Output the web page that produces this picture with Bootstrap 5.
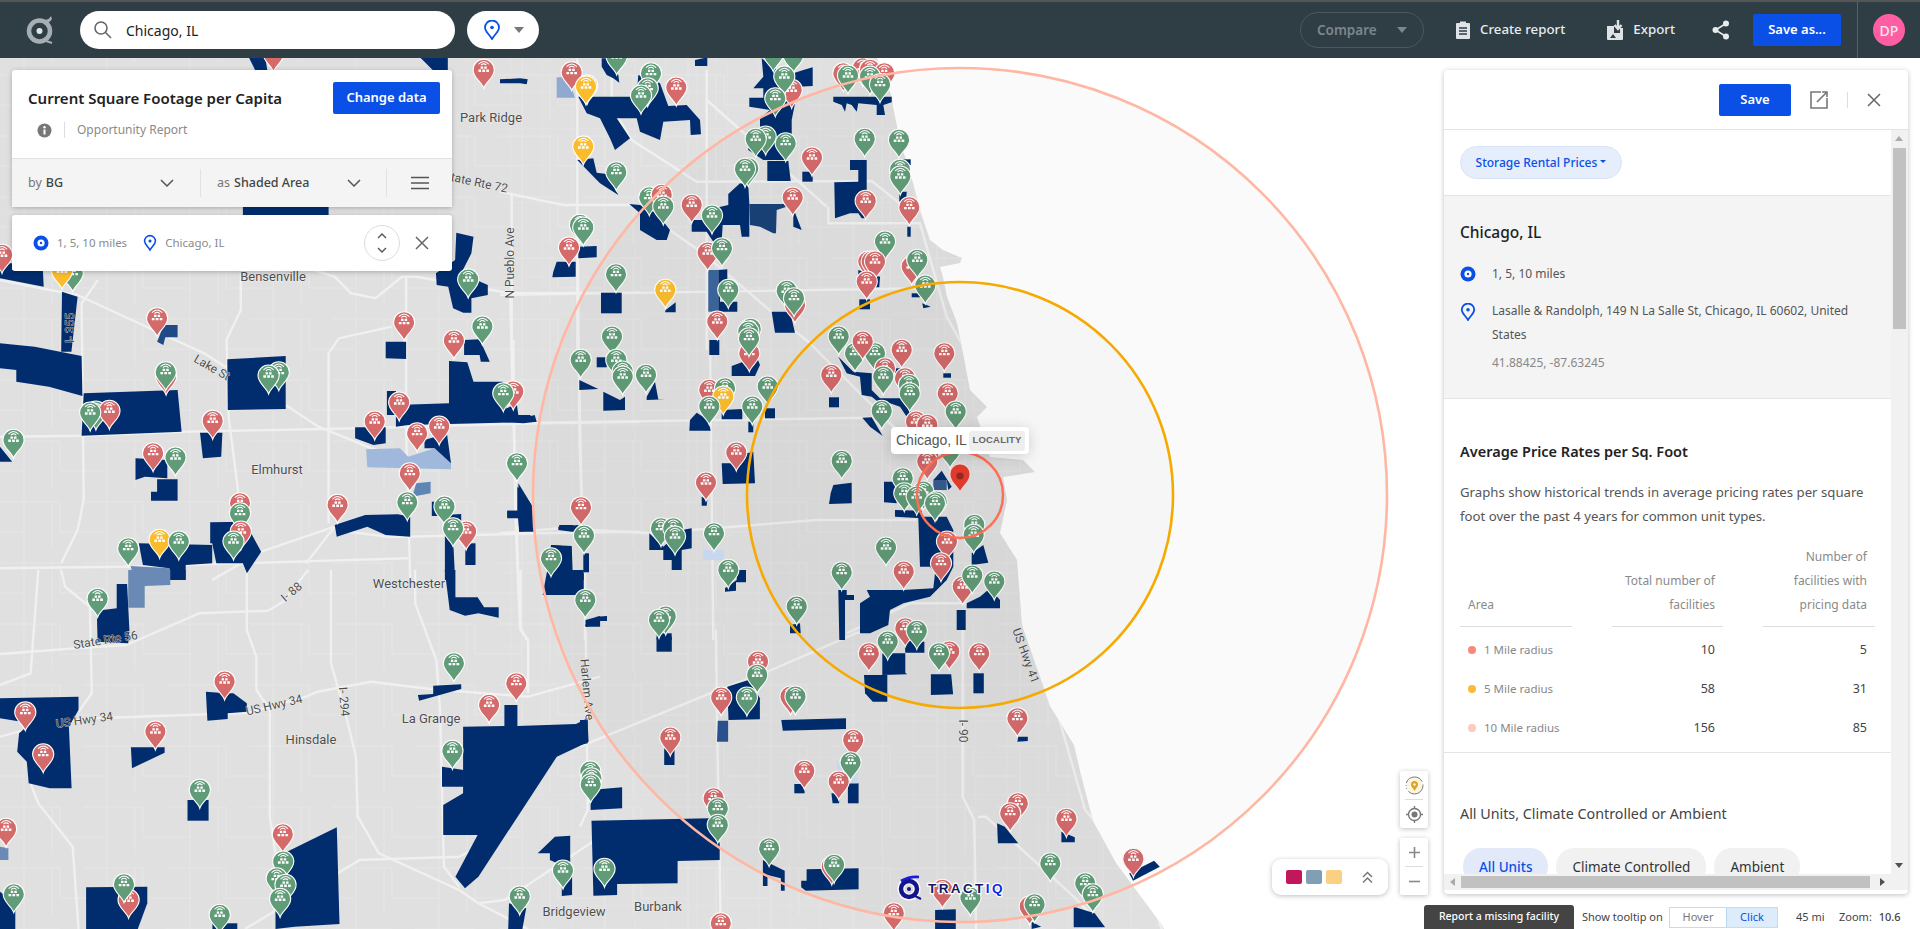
<!DOCTYPE html>
<html lang="en">
<head>
    <meta charset="UTF-8">
    <meta name="viewport" content="width=device-width, initial-scale=1.0">
    <title>Chicago, IL - TractIQ</title>
    <link href="https://cdn.jsdelivr.net/npm/bootstrap@5.3.0/dist/css/bootstrap.min.css" rel="stylesheet">
    <style>
        body { font-family: "Noto Sans", "Liberation Sans", sans-serif; font-size: 13px; color: #333; background: #fff; }
        .tq-page { height: 929px; overflow: hidden; }
        .tq-top { height: 58px; background: #2f3d45; border-top: 2px solid #555; padding: 0; flex-wrap: nowrap; }
        .tq-logo { width: 80px; }
        .tq-search { width: 375px; height: 38px; background: #fff; border-radius: 19px; padding-left: 13px; gap: 13px; font-size: 14px; color: #222; }
        .tq-locpill { width: 72px; height: 38px; background: #fff; border-radius: 19px; margin-left: 12px; gap: 13px; }
        .tq-caret { width: 0; height: 0; border-left: 5px solid transparent; border-right: 5px solid transparent; border-top: 6px solid #777; }
        .tq-compare { width: 124px; height: 36px; border: 1px solid #4a5860; border-radius: 18px; color: #7b878d; font-weight: 600; font-size: 13.5px; padding: 0 16px; }
        .tq-compare .tq-caret { border-top-color: #7b878d; }
        .tq-toplink { color: #e8ecee; font-size: 13.3px; font-weight: 500; gap: 9px; }
        .tq-btn { background: #0a50e6; border: 0; border-radius: 2px; color: #fff; font-weight: 600; font-size: 13px; padding: 0; }
        .tq-btn:hover { background: #0a50e6; color: #fff; }
        .tq-saveas { width: 88px; height: 32px; }
        .tq-userbox { width: 63px; height: 56px; border-left: 1px solid #566269; margin-left: 16px; }
        .tq-avatar { width: 32px; height: 32px; border-radius: 50%; background: #ff5fa2; color: #f3e6ee; font-size: 14px; font-weight: 500; }

        .tq-map { height: 871px; }
        .tq-mapsvg { position: absolute; left: 0; top: 0; }
        .tq-float { position: absolute; background: #fff; border-radius: 3px; box-shadow: 0 1px 5px rgba(0,0,0,.25); }
        .tq-report { left: 12px; top: 12px; width: 440px; height: 137px; }
        .tq-report-top { height: 88px; padding: 12px 12px 0 16px; }
        .tq-report-title { font-size: 15px; font-weight: 600; color: #222; }
        .tq-change { width: 107px; height: 32px; }
        .tq-report-sub { color: #8a8a8a; font-size: 12px; gap: 12px; margin: 7px 0 0 0; padding-left: 9px; }
        .tq-vsep { width: 1px; height: 16px; background: #ddd; }
        .tq-report-bar { height: 49px; background: #f4f4f4; border-top: 1px solid #e2e2e2; font-size: 12.5px; color: #777; }
        .tq-report-bar b { font-weight: 500; color: #444; margin-left: 4px; }
        .tq-cell1 { width: 188px; padding: 0 26px 0 16px; }
        .tq-cell2 { width: 187px; padding: 0 25px 0 16px; border-left: 1px solid #e2e2e2; border-right: 1px solid #e2e2e2; height: 28px; }
        .tq-area { left: 12px; top: 157px; width: 440px; height: 56px; padding: 0 23px 0 21px; color: #8a8a8a; font-size: 11.5px; }
        .tq-stepper { width: 36px; height: 36px; border: 1px solid #ddd; border-radius: 50%; margin-right: 15px; }

        .tq-tip { left: 891px; top: 369px; width: 138px; height: 27px; border-radius: 4px; padding: 0 4px 0 5px; box-shadow: 0 2px 14px rgba(0,0,0,.16); font-family: "Liberation Sans", sans-serif; font-size: 14px; color: #555; }
        .tq-tipbadge { width: 56px; height: 20px; background: #eee; border-radius: 3px; font-size: 9.5px; font-weight: 700; color: #666; letter-spacing: .2px; }
        .tq-ctrl { left: 1400px; width: 28px; height: 57px; border-radius: 2px; }
        .tq-ctrl1 { top: 713px; }
        .tq-ctrl2 { top: 780px; }
        .tq-ctrl-line { height: 1px; background: #ddd; margin: 0 5px; }
        .tq-ctrl-cell { height: 28px; }
        .tq-legend { left: 1272px; top: 801px; width: 116px; height: 36px; border-radius: 9px; padding-left: 14px; gap: 4px; }
        .tq-swatch { width: 16px; height: 14px; border-radius: 2px; }
        .tq-sw1 { background: #c2185b; }
        .tq-sw2 { background: #7f9fb5; }
        .tq-sw3 { background: #fbcf84; }

        .tq-panel { left: 1444px; top: 12px; width: 464px; height: 824px; border-radius: 4px; overflow: hidden; }
        .tq-panel-head { height: 60px; border-bottom: 1px solid #e4e4e4; padding-right: 27px; gap: 19px; flex-shrink: 0; }
        .tq-save { width: 72px; height: 32px; }
        .tq-panel-mid { height: 744px; }
        .tq-scroll { width: 447px; overflow: hidden; }
        .tq-rail { width: 17px; background: #f1f1f1; position: relative; }
        .tq-thumb { position: absolute; left: 2px; top: 18px; width: 13px; height: 181px; background: #c1c1c1; }
        .tq-arrowup { position: absolute; left: 4px; top: 6px; width: 0; height: 0; border: 4px solid transparent; border-top: 0; border-bottom: 5px solid #aaa; }
        .tq-arrowdn { position: absolute; left: 4px; bottom: 6px; width: 0; height: 0; border: 4px solid transparent; border-bottom: 0; border-top: 5px solid #505050; }
        .tq-hbar { height: 16px; background: #f1f1f1; position: relative; }
        .tq-hthumb { position: absolute; left: 17px; top: 2px; width: 409px; height: 12px; background: #c1c1c1; }
        .tq-arrowl { position: absolute; left: 6px; top: 4px; border: 4px solid transparent; border-left: 0; border-right: 5px solid #aaa; }
        .tq-arrowr { position: absolute; left: 436px; top: 4px; border: 4px solid transparent; border-right: 0; border-left: 5px solid #505050; }

        .tq-sec-drop { height: 66px; padding-left: 16px; border-bottom: 1px solid #e4e4e4; }
        .tq-drop { height: 33px; width: 162px; background: #e6edfb; border: 1px solid #d8e2f6; border-radius: 17px; color: #0a50e6; font-size: 12px; font-weight: 500; padding: 0; }
        .tq-sec-place { height: 203px; background: #f4f4f4; border-bottom: 1px solid #e4e4e4; padding: 25px 16px 0; }
        .tq-place { font-size: 15.5px; font-weight: 500; color: #222; margin-bottom: 18px; }
        .tq-placerow { gap: 16px; font-size: 12px; color: #555; line-height: 24px; }
        .tq-placerow-first { margin-bottom: 13px; }
        .tq-coord { color: #888; font-size: 12px; margin: 4px 0 0 32px; line-height: 24px; }
        .tq-sec-rates { height: 354px; border-bottom: 1px solid #e4e4e4; padding: 40px 16px 0; }
        .tq-h-rates { font-size: 14.5px; font-weight: 600; color: #222; line-height: 24px; margin: 0; }
        .tq-p-rates { font-size: 13.2px; color: #555; line-height: 24px; margin: 17px 0 0; }
        .tq-grid { display: grid; grid-template-columns: 112px 111px 112px; column-gap: 40px; margin-top: 17px; }
        .tq-grid > div { padding: 0 8px; font-size: 12px; }
        .tq-gh { color: #8a8a8a; line-height: 24px; border-bottom: 1px solid #ddd; padding-bottom: 9px !important; align-self: end; height: 82px; display: flex; align-items: flex-end; justify-content: flex-end; text-align: right; font-size: 12px; }
        .tq-gh.tq-left { justify-content: flex-start; text-align: left; }
        .tq-gc { height: 39px; line-height: 39px; margin-top: 0; text-align: right; color: #444; font-size: 12.5px !important; white-space: nowrap; }
        .tq-gc.tq-left { text-align: left; color: #888; font-size: 11.5px !important; }
        .tq-gridbody { margin-top: 3px; }
        .tq-dot { display: inline-block; width: 8px; height: 8px; border-radius: 50%; margin-right: 8px; }
        .tq-sec-units { padding: 49px 16px 0; font-size: 14.3px; color: #444; line-height: 24px; }
        .tq-units { gap: 8px; margin: 22px 0 0 3px; }
        .tq-unit { height: 37px; padding: 0 16px; border-radius: 18px; background: #f1f1f1; font-size: 13.5px; color: #333; white-space: nowrap; }
        .tq-unit-on { background: #e2eafa; color: #0a50e6; font-weight: 500; }

        .tq-foot { position: absolute; left: 1424px; top: 847px; height: 24px; font-size: 11px; color: #444; white-space: nowrap; }
        .tq-missing { width: 150px; height: 24px; background: #444; color: #fff; border-radius: 3px 3px 0 0; font-weight: 500; font-size: 10.5px; }
        .tq-tooltipon { margin-left: 8px; width: 87px; }
        .tq-toggle { height: 21px; border: 1px solid #d8d8d8; }
        .tq-toggle span { display: flex; align-items: center; justify-content: center; }
        .tq-hover { width: 56px; color: #777; }
        .tq-click { width: 51px; background: #dcecfb; color: #0a50e6; border-left: 1px solid #b9d6f2; }
        .tq-dist { margin-left: 18px; width: 43px; }
        .tq-zoomv { font-weight: 500; margin-left: 4px; }
        .tq-gap-create { margin-left: 31px; }
        .tq-gap-export { margin-left: 41px; }
        .tq-gap-share { margin: 0 23px 0 37px; }
    </style>
</head>

<body>
    <div class="tq-page d-flex flex-column">
        <nav class="navbar tq-top d-flex align-items-center">
            <div class="tq-logo d-flex justify-content-center">
                <svg width="30" height="30" viewBox="0 0 30 30"><circle cx="14.5" cy="16" r="10.5" fill="none" stroke="#a5aeb2" stroke-width="4.5"/><circle cx="14.5" cy="16" r="3" fill="#dfe3e5"/><path d="M19 5 C22 5 24 4 26 1 L27 4 C25 7 23 8 21 8Z" fill="#a5aeb2"/><path d="M21 26 L27 28" stroke="#a5aeb2" stroke-width="2"/></svg>
            </div>
            <div class="tq-search d-flex align-items-center">
                <svg width="20" height="20" viewBox="0 0 20 20" fill="none" stroke="#666" stroke-width="1.6"><circle cx="8" cy="8" r="6"/><path d="M12.5 12.5 L18 18"/></svg>
                <span>Chicago, IL</span>
            </div>
            <div class="tq-locpill d-flex align-items-center justify-content-center">
                <svg width="18" height="20" viewBox="0 0 18 20"><path d="M9 19 C6 14 2 11.5 2 7.5 A7 7 0 0 1 16 7.5 C16 11.5 12 14 9 19Z" fill="none" stroke="#0a50e6" stroke-width="1.8"/><circle cx="9" cy="7.5" r="1.8" fill="#0a50e6"/></svg>
                <span class="tq-caret"></span>
            </div>
            <div class="ms-auto d-flex align-items-center">
                <div class="tq-compare d-flex align-items-center justify-content-between"><span>Compare</span><span class="tq-caret"></span></div>
                <div class="tq-toplink tq-gap-create d-flex align-items-center">
                    <svg width="16" height="20" viewBox="0 0 16 20"><path d="M2 3 H5 V1.5 H11 V3 H14 A1 1 0 0 1 15 4 V18 A1 1 0 0 1 14 19 H2 A1 1 0 0 1 1 18 V4 A1 1 0 0 1 2 3Z" fill="#dfe3e5"/><path d="M4 8 H12 M4 11 H12 M4 14 H12" stroke="#2f3d45" stroke-width="1.4"/></svg>
                    <span>Create report</span>
                </div>
                <div class="tq-toplink tq-gap-export d-flex align-items-center">
                    <svg width="18" height="22" viewBox="0 0 18 22"><path d="M1 7 H8 V14 H14 V9 H17 V20 A1 1 0 0 1 16 21 H2 A1 1 0 0 1 1 20Z" fill="#dfe3e5"/><path d="M12 1 V8 M8.5 6 L12 10 L15.5 6" stroke="#dfe3e5" stroke-width="2.4" fill="none"/><path d="M4 19 L7 15 L10 19Z" fill="#2f3d45"/></svg>
                    <span>Export</span>
                </div>
                <svg class="tq-gap-share" width="18" height="20" viewBox="0 0 18 20" fill="#e8ecee"><circle cx="14" cy="3.5" r="3"/><circle cx="3.5" cy="10" r="3"/><circle cx="14" cy="16.5" r="3"/><path d="M14 3.5 L3.5 10 L14 16.5" fill="none" stroke="#e8ecee" stroke-width="1.5"/></svg>
                <button class="btn tq-btn tq-saveas" type="button">Save as...</button>
                <div class="tq-userbox d-flex align-items-center justify-content-center">
                    <div class="tq-avatar d-flex align-items-center justify-content-center">DP</div>
                </div>
            </div>
        </nav>

        <main class="tq-map position-relative overflow-hidden">
            <svg id="mapSvg" class="tq-mapsvg" width="1920" height="871" viewBox="0 58 1920 871"></svg>

            <div class="tq-float tq-report">
                <div class="tq-report-top">
                    <div class="d-flex justify-content-between align-items-center">
                        <span class="tq-report-title">Current Square Footage per Capita</span>
                        <button class="btn tq-btn tq-change" type="button">Change data</button>
                    </div>
                    <div class="tq-report-sub d-flex align-items-center">
                        <svg width="15" height="15" viewBox="0 0 15 15"><circle cx="7.5" cy="7.5" r="7" fill="#777"/><rect x="6.5" y="6.5" width="2" height="5" fill="#fff"/><circle cx="7.5" cy="4.2" r="1.2" fill="#fff"/></svg>
                        <span class="tq-vsep"></span>
                        <span>Opportunity Report</span>
                    </div>
                </div>
                <div class="tq-report-bar d-flex align-items-center">
                    <div class="tq-cell1 d-flex justify-content-between align-items-center">
                        <span>by<b>BG</b></span>
                        <svg width="14" height="8" viewBox="0 0 14 8" fill="none" stroke="#555" stroke-width="1.5"><path d="M1 1 L7 7 L13 1"/></svg>
                    </div>
                    <div class="tq-cell2 d-flex justify-content-between align-items-center">
                        <span>as<b>Shaded Area</b></span>
                        <svg width="14" height="8" viewBox="0 0 14 8" fill="none" stroke="#555" stroke-width="1.5"><path d="M1 1 L7 7 L13 1"/></svg>
                    </div>
                    <div class="flex-grow-1 d-flex justify-content-center">
                        <svg width="18" height="14" viewBox="0 0 18 14" stroke="#555" stroke-width="1.6"><path d="M0 1.5 H18 M0 7 H18 M0 12.5 H18"/></svg>
                    </div>
                </div>
            </div>

            <div class="tq-float tq-area d-flex align-items-center">
                <svg width="16" height="16" viewBox="0 0 16 16" class="me-2"><circle cx="8" cy="8" r="7.5" fill="#0a50e6"/><circle cx="8" cy="8" r="3.6" fill="#fff"/><circle cx="8" cy="8" r="1.2" fill="#0a50e6"/></svg>
                <span>1, 5, 10 miles</span>
                <svg width="14" height="18" viewBox="0 0 18 20" class="ms-3 me-2"><path d="M9 19 C6 14 2 11.5 2 7.5 A7 7 0 0 1 16 7.5 C16 11.5 12 14 9 19Z" fill="none" stroke="#0a50e6" stroke-width="2"/><circle cx="9" cy="7.5" r="2" fill="#0a50e6"/></svg>
                <span>Chicago, IL</span>
                <div class="tq-stepper ms-auto d-flex flex-column align-items-center justify-content-center gap-2">
                    <svg width="10" height="6" viewBox="0 0 10 6" fill="none" stroke="#555" stroke-width="1.4"><path d="M1 5 L5 1 L9 5"/></svg>
                    <svg width="10" height="6" viewBox="0 0 10 6" fill="none" stroke="#555" stroke-width="1.4"><path d="M1 1 L5 5 L9 1"/></svg>
                </div>
                <svg width="14" height="14" viewBox="0 0 14 14" stroke="#666" stroke-width="1.5"><path d="M1 1 L13 13 M13 1 L1 13"/></svg>
            </div>

            <div class="tq-float tq-tip d-flex align-items-center justify-content-between">
                <span>Chicago, IL</span><span class="tq-tipbadge d-flex align-items-center justify-content-center">LOCALITY</span>
            </div>

            <div class="tq-float tq-legend d-flex align-items-center">
                <span class="tq-swatch tq-sw1"></span><span class="tq-swatch tq-sw2"></span><span class="tq-swatch tq-sw3"></span>
                <svg class="ms-3" width="11" height="13" viewBox="0 0 11 13" fill="none" stroke="#777" stroke-width="1.5"><path d="M1 6 L5.5 1.5 L10 6 M1 11.5 L5.5 7 L10 11.5"/></svg>
            </div>
            <div class="tq-float tq-ctrl tq-ctrl1">
                <div class="tq-ctrl-cell d-flex align-items-center justify-content-center">
                    <svg width="19" height="19" viewBox="0 0 19 19"><circle cx="9.5" cy="9.5" r="8.5" fill="#fbf5e2" stroke="#777" stroke-width="1" stroke-dasharray="20 3 1 2 1 2"/><path d="M9.5 15 C8 12 6 11 6 8.5 A3.5 3.5 0 0 1 13 8.5 C13 11 11 12 9.5 15Z" fill="#d9a522"/><circle cx="9.5" cy="8.5" r="1.2" fill="#fbf5e2"/></svg>
                </div>
                <div class="tq-ctrl-line"></div>
                <div class="tq-ctrl-cell d-flex align-items-center justify-content-center">
                    <svg width="17" height="17" viewBox="0 0 17 17" fill="none" stroke="#777"><circle cx="8.5" cy="8.5" r="6" stroke-width="1.4"/><circle cx="8.5" cy="8.5" r="3" fill="#777" stroke="none"/><path d="M8.5 0 V3 M8.5 14 V17 M0 8.5 H3 M14 8.5 H17" stroke-width="1.4"/></svg>
                </div>
            </div>
            <div class="tq-float tq-ctrl tq-ctrl2">
                <div class="tq-ctrl-cell d-flex align-items-center justify-content-center">
                    <svg width="11" height="11" viewBox="0 0 11 11" stroke="#888" stroke-width="1.6"><path d="M5.5 0 V11 M0 5.5 H11"/></svg>
                </div>
                <div class="tq-ctrl-line"></div>
                <div class="tq-ctrl-cell d-flex align-items-center justify-content-center">
                    <svg width="11" height="3" viewBox="0 0 11 3" stroke="#888" stroke-width="1.6"><path d="M0 1.5 H11"/></svg>
                </div>
            </div>

            <aside class="tq-float tq-panel d-flex flex-column">
                <div class="tq-panel-head d-flex align-items-center justify-content-end">
                    <button class="btn tq-btn tq-save" type="button">Save</button>
                    <svg width="18" height="18" viewBox="0 0 18 18" fill="none" stroke="#777" stroke-width="1.6"><path d="M11 1 H1 V17 H17 V7"/><path d="M7 11 L17 1 M12 1 H17 V6"/></svg>
                    <span class="tq-vsep"></span>
                    <svg width="14" height="14" viewBox="0 0 14 14" stroke="#666" stroke-width="1.5"><path d="M1 1 L13 13 M13 1 L1 13"/></svg>
                </div>
                <div class="tq-panel-mid d-flex">
                    <div class="tq-scroll">
                        <div class="tq-sec-drop d-flex align-items-center">
                            <button class="btn tq-drop dropdown-toggle" type="button">Storage Rental Prices</button>
                        </div>
                        <section class="tq-sec-place">
                            <div class="tq-place">Chicago, IL</div>
                            <div class="tq-placerow tq-placerow-first d-flex align-items-center">
                                <svg width="16" height="16" viewBox="0 0 16 16" class="flex-shrink-0"><circle cx="8" cy="8" r="7.5" fill="#0a50e6"/><circle cx="8" cy="8" r="3.6" fill="#fff"/><circle cx="8" cy="8" r="1.2" fill="#0a50e6"/></svg>
                                <span>1, 5, 10 miles</span>
                            </div>
                            <div class="tq-placerow d-flex align-items-start">
                                <svg width="16" height="18" viewBox="0 0 18 20" class="flex-shrink-0 mt-1"><path d="M9 19 C6 14 2 11.5 2 7.5 A7 7 0 0 1 16 7.5 C16 11.5 12 14 9 19Z" fill="none" stroke="#0a50e6" stroke-width="2"/><circle cx="9" cy="7.5" r="2" fill="#0a50e6"/></svg>
                                <span>Lasalle &amp; Randolph, 149 N La Salle St, Chicago, IL 60602, United States</span>
                            </div>
                            <div class="tq-coord">41.88425, -87.63245</div>
                        </section>
                        <section class="tq-sec-rates">
                            <h5 class="tq-h-rates">Average Price Rates per Sq. Foot</h5>
                            <p class="tq-p-rates">Graphs show historical trends in average pricing rates per square foot over the past 4 years for common unit types.</p>
                            <div class="tq-grid">
                                <div class="tq-gh tq-left">Area</div>
                                <div class="tq-gh">Total number of facilities</div>
                                <div class="tq-gh">Number of facilities with pricing data</div>
                            </div>
                            <div class="tq-grid tq-gridbody" id="rateRows"></div>
                        </section>
                        <section class="tq-sec-units">
                            <div>All Units, Climate Controlled or Ambient</div>
                            <div class="tq-units d-flex">
                                <span class="tq-unit tq-unit-on d-flex align-items-center">All Units</span>
                                <span class="tq-unit d-flex align-items-center">Climate Controlled</span>
                                <span class="tq-unit d-flex align-items-center">Ambient</span>
                            </div>
                        </section>
                    </div>
                    <div class="tq-rail"><span class="tq-arrowup"></span><span class="tq-thumb"></span><span class="tq-arrowdn"></span></div>
                </div>
                <div class="tq-hbar"><span class="tq-arrowl"></span><span class="tq-hthumb"></span><span class="tq-arrowr"></span></div>
            </aside>

            <div class="tq-foot d-flex align-items-center">
                <div class="tq-missing d-flex align-items-center justify-content-center">Report a missing facility</div>
                <span class="tq-tooltipon">Show tooltip on</span>
                <div class="tq-toggle d-flex"><span class="tq-hover">Hover</span><span class="tq-click">Click</span></div>
                <span class="tq-dist">45 mi</span>
                <span>Zoom: <span class="tq-zoomv">10.6</span></span>
            </div>
        </main>
    </div>

    <script src="https://cdn.jsdelivr.net/npm/bootstrap@5.3.0/dist/js/bootstrap.bundle.min.js"></script>
    <script>
        const rates = [
            ['#f9877a', '1 Mile radius', 10, 5],
            ['#fbbb3a', '5 Mile radius', 58, 31],
            ['#fdc9bd', '10 Mile radius', 156, 85]
        ];
        document.getElementById('rateRows').innerHTML = rates.map(r => `
            <div class="tq-gc tq-left"><span class="tq-dot" style="background:${r[0]}"></span>${r[1]}</div>
            <div class="tq-gc">${r[2]}</div>
            <div class="tq-gc">${r[3]}</div>`).join('');

        // map data is kept in the coordinates of the crop it was read from: [left, top, scaleX, scaleY]
        const Z1 = [0, 0, 2.45, 3], Z6 = [0, 230, 2.45, 3], Z8 = [500, 50, 3, 3], Z9 = [500, 340, 3, 3],
            Z11 = [0, 570, 2.613, 3], Z12 = [580, 630, 2.613, 3];
        const BLUE = '#012d6e', MID = '#2a5490', SOFT = '#6a89b5', PALE = '#9fb8dc', ICE = '#cbdcf2';
        let out = '';

        function pts(z, a) {
            let s = [];
            for (let i = 0; i < a.length; i += 2) s.push((z[0] + a[i] / z[2]).toFixed(1) + ',' + (z[1] + a[i + 1] / z[3]).toFixed(1));
            return s.join(' ');
        }
        function polys(z, fill, list) { list.forEach(a => out += `<polygon points="${pts(z, a)}" fill="${fill}"/>`); }
        function roads(z, list, w) { list.forEach(a => out += `<polyline points="${pts(z, a)}" fill="none" stroke="#f0f0f0" stroke-width="${w || 2.4}" stroke-linejoin="round"/>`); }
        function pins(z, str) {
            const cols = { r: '#d56a6b', g: '#619c78', y: '#fbbc2c' };
            str.trim().split(/\s+/).forEach(p => {
                const c = p.split(','), x = z[0] + (+c[0].slice(1)) / z[2], y = z[1] + (+c[1]) / z[3];
                out += `<use href="#pin" x="${x.toFixed(1)}" y="${y.toFixed(1)}" fill="${cols[p[0]]}"/>`;
            });
        }
        function label(x, y, t, rot, size) {
            out += `<text x="${x}" y="${y}" class="mlabel" font-size="${size || 12}" transform="rotate(${rot} ${x} ${y})">${t}</text>`;
        }

        const shore = '0,58 877,58 892,97 893,107 900,140 913,183 920,210 930,240 943,250 962,258 960,263 940,267 943,277 947,297 957,323 963,353 970,390 987,407 977,417 990,457 1023,460 1035,472 1003,477 1007,500 1000,533 1017,560 1022,625 1050,706 1074,745 1081,775 1093,821 1116,863 1162,925 1164,929 0,929';

        out += `<defs>
            <clipPath id="land"><polygon points="${shore}"/></clipPath>
            <pattern id="blocks" width="83" height="61" patternUnits="userSpaceOnUse"><path d="M0 14 H60 V44 H83 M24 0 V61 M52 14 V61 M0 44 H24" fill="none" stroke="#e6e6e6" stroke-width="1"/></pattern>
            <pattern id="blocks2" width="31" height="37" patternUnits="userSpaceOnUse"><path d="M0 18 H31 M15 0 V37" fill="none" stroke="#e4e4e4" stroke-width=".8"/></pattern>
            <g id="pin"><path d="M0 0 C-2 -6.5 -10.6 -10.5 -10.6 -18.4 A10.6 10.6 0 1 1 10.6 -18.4 C10.6 -10.5 2 -6.5 0 0Z" stroke="#fff" stroke-width="1.1"/>
                <g transform="translate(0 -1) scale(1.12)"><path d="M-4.6 -20.6 Q0 -25.4 4.6 -20.6 M-2.4 -19.8 Q0 -22 2.4 -19.8" fill="none" stroke="#fff" stroke-width=".9"/>
                <path d="M-2.7 -18.6 h2.2 v2 h-2.2z M.5 -18.6 h2.2 v2 h-2.2z M-4.7 -15.9 h2.4 v2.2 h-2.4z M-1.2 -15.9 h2.4 v2.2 h-2.4z M2.3 -15.9 h2.4 v2.2 h-2.4z" fill="#fff"/></g></g>
        </defs>`;
        out += `<rect x="0" y="58" width="1920" height="871" fill="#fff"/>`;
        out += `<polygon points="${shore}" fill="#e0e0e0"/>`;
        out += `<g clip-path="url(#land)"><rect x="0" y="58" width="1300" height="871" fill="url(#blocks)"/><rect x="500" y="58" width="800" height="871" fill="url(#blocks2)"/>`;
        out += `</g><g clip-path="url(#land)">`;

        // roads
        roads(Z6, [[0, 620, 200, 617, 445, 605, 800, 597, 1310, 580, 1568, 575], [0, 150, 100, 175, 190, 195, 500, 370, 700, 525, 780, 590, 900, 650, 1000, 690],
            [590, 130, 590, 240, 555, 330, 560, 560, 585, 800, 590, 830], [730, 105, 820, 140, 860, 190, 920, 205, 985, 140, 1020, 140, 1250, 190, 1568, 188],
            [995, 140, 995, 600, 1005, 1050], [1250, 200, 1260, 660, 1270, 1050], [1415, 0, 1420, 640, 1425, 810], [960, 290, 830, 325, 805, 370, 805, 880],
            [0, 1015, 300, 1010, 1000, 985], [240, 150, 200, 220, 205, 810, 190, 900, 150, 1000], [820, 890, 640, 965, 520, 1050], [820, 890, 750, 1000], [820, 900, 950, 920, 1000, 920, 1310, 910, 1568, 905]]);
        roads(Z11, [[0, 252, 200, 235, 330, 225, 520, 130, 700, 122, 740, 95, 805, 0], [0, 500, 130, 460, 250, 445, 650, 428, 800, 380, 830, 365, 970, 335, 1130, 358, 1380, 380, 1568, 320],
            [645, 0, 645, 180, 670, 260, 670, 360, 705, 420, 705, 740, 720, 850], [865, 0, 865, 280, 905, 440, 930, 560, 935, 740, 990, 850, 1200, 960, 1250, 1000, 1380, 1077],
            [1085, 0, 1085, 100, 1140, 270, 1150, 420, 1160, 890, 1200, 950], [1360, 0, 1360, 180, 1380, 210, 1380, 370], [0, 345, 80, 310, 100, 0], [160, 0, 170, 50, 235, 110, 240, 370, 205, 425],
            [80, 640, 100, 700, 190, 830, 205, 1077], [640, 1077, 940, 870, 1200, 860, 1320, 790], [1250, 1000, 1320, 990, 1568, 800]]);
        roads(Z12, [[0, 350, 340, 190, 500, 120, 720, 10, 760, 0], [355, 0, 360, 390, 368, 897], [1000, 230, 1000, 500, 1030, 570, 1035, 897], [1040, 560, 1060, 560, 1290, 800, 1370, 897],
            [1000, 230, 1000, 0], [15, 0, 20, 540, 0, 590], [1180, 0, 1240, 220, 1320, 540, 1480, 760, 1520, 897]]);
        roads(Z8, [[0, 425, 190, 465, 390, 465], [395, 270, 590, 395, 1115, 393, 1225, 480], [985, 470, 985, 520, 1260, 520, 1300, 660, 1340, 800, 1390, 890], [620, 60, 620, 900],
            [620, 150, 980, 470], [0, 735, 1290, 715], [232, 25, 232, 900], [335, 25, 335, 170, 395, 270], [400, 465, 610, 610, 820, 790, 930, 880], [35, 430, 35, 900]]);
        roads(Z9, [[0, 580, 180, 565, 450, 580, 700, 560, 950, 540, 1250, 540], [0, 250, 1120, 233], [920, 0, 1140, 220, 1300, 380], [40, 0, 45, 500, 60, 860, 80, 900], [235, 0, 245, 480],
            [630, 0, 640, 900], [255, 640, 255, 900], [1040, 880, 1230, 790, 1400, 790]]);
        out += `</g>`;

        // shaded block groups
        polys(Z1, BLUE, [[610, 173, 650, 173, 655, 210, 625, 210], [1030, 173, 1097, 173, 1097, 210, 1060, 210], [595, 620, 805, 620, 805, 645, 595, 645]]);
        polys(Z8, BLUE, [
            [235, 140, 410, 140, 415, 75, 480, 100, 505, 168, 560, 165, 600, 210, 603, 253, 572, 255, 570, 210, 490, 215, 480, 270, 420, 245, 410, 205, 350, 205, 390, 265, 345, 300, 330, 265, 300, 205, 260, 190],
            [305, 25, 325, 25, 355, 75, 358, 98, 340, 85, 320, 75, 305, 50], [0, 88, 60, 85, 83, 88, 80, 103, 60, 100, 0, 100],
            [785, 25, 830, 60, 880, 70, 910, 60, 938, 52, 938, 108, 895, 110, 875, 210, 875, 255, 860, 330, 790, 330, 745, 300, 745, 295, 780, 290, 780, 205, 810, 180, 748, 170, 748, 143, 790, 143, 790, 115, 760, 115, 790, 80],
            [802, 333, 865, 333, 872, 393, 802, 393], [1000, 140, 1175, 140, 1175, 157, 1150, 165, 1155, 195, 1130, 195, 1130, 165, 1075, 160, 1070, 185, 1055, 165, 1040, 160, 1035, 185, 1025, 165, 1000, 155],
            [232, 330, 280, 325, 290, 368, 320, 372, 355, 435, 300, 400], [388, 462, 420, 465, 470, 490, 510, 540, 500, 570, 470, 570, 420, 540, 420, 490],
            [575, 510, 610, 510, 620, 530, 620, 480, 685, 465, 685, 432, 720, 400, 745, 405, 748, 462, 748, 560, 725, 560, 720, 525, 668, 525, 665, 570, 640, 575, 620, 545, 575, 545],
            [160, 665, 170, 635, 227, 635, 227, 680, 157, 682], [235, 590, 290, 588, 290, 622, 235, 625], [303, 728, 365, 728, 365, 790, 303, 790], [497, 780, 527, 757, 527, 787, 495, 787],
            [655, 660, 682, 658, 682, 690, 660, 725, 660, 755, 712, 755, 712, 785, 655, 785], [1003, 397, 1075, 395, 1075, 360, 1050, 360, 1050, 330, 1100, 330, 1100, 505, 1085, 505, 1075, 490, 1050, 490, 1005, 505],
            [1195, 328, 1232, 328, 1232, 345, 1195, 345], [1198, 425, 1220, 425, 1218, 455, 1198, 455], [1222, 530, 1232, 530, 1232, 560, 1222, 560], [907, 365, 938, 365, 938, 395, 907, 395],
            [815, 785, 870, 785, 885, 848, 825, 848], [1078, 748, 1110, 748, 1110, 778, 1078, 778], [1235, 730, 1260, 730, 1260, 742, 1235, 742], [1267, 760, 1292, 770, 1270, 775],
            [1075, 660, 1140, 680, 1138, 712, 1075, 712], [585, 30, 622, 22, 622, 48, 585, 48], [880, 475, 905, 540, 880, 530]]);
        polys(Z8, '#1a4278', [[748, 462, 860, 462, 860, 470, 830, 480, 828, 550, 820, 550, 780, 530, 750, 525]]);
        polys(Z8, '#3c659e', [[625, 660, 655, 660, 655, 785, 625, 785]]);
        polys(Z8, '#8fa9d0', [[170, 82, 205, 82, 225, 143, 170, 143]]);
        polys(Z9, BLUE, [
            [628, 0, 658, 0, 658, 45, 628, 45], [695, 78, 770, 50, 780, 75, 765, 108, 695, 108], [290, 52, 320, 52, 320, 82, 290, 82], [238, 120, 295, 147, 238, 150],
            [310, 155, 360, 180, 375, 170, 375, 210, 310, 212], [440, 170, 465, 125, 475, 178, 497, 178, 440, 180],
            [1015, 50, 1060, 95, 1115, 100, 1115, 150, 1140, 175, 1200, 175, 1240, 225, 1245, 240, 1220, 230, 1200, 200, 1170, 190, 1165, 210, 1115, 170, 1085, 165, 1080, 110, 1040, 100],
            [987, 172, 1017, 172, 1017, 202, 987, 202], [1185, 85, 1200, 85, 1200, 100, 1185, 100], [1330, 100, 1353, 100, 1353, 113, 1330, 113], [570, 240, 590, 218, 625, 240, 632, 272, 568, 272],
            [665, 210, 727, 207, 727, 238, 665, 238], [795, 205, 825, 205, 825, 235, 795, 235], [745, 245, 760, 245, 760, 277, 745, 277], [1087, 233, 1115, 232, 1148, 288, 1110, 260],
            [665, 370, 710, 370, 740, 340, 760, 335, 765, 430, 668, 432], [605, 470, 622, 480, 620, 497, 605, 497], [1000, 435, 1055, 428, 1055, 490, 987, 492, 992, 460], [1152, 425, 1190, 425, 1190, 490, 1152, 487],
            [1185, 510, 1265, 512, 1265, 535, 1185, 530], [1255, 530, 1340, 530, 1360, 570, 1360, 680, 1340, 720, 1320, 740, 1290, 770, 1210, 790, 1170, 810, 1165, 855, 1110, 880, 1080, 880, 1080, 790, 1110, 770, 1100, 750, 1210, 750, 1300, 745, 1305, 700, 1290, 680, 1260, 680],
            [1325, 392, 1355, 440, 1345, 450, 1340, 420, 1300, 420], [1415, 640, 1450, 615, 1465, 668, 1415, 675], [1400, 790, 1440, 770, 1470, 745, 1500, 780, 1500, 805, 1400, 805], [1370, 810, 1397, 810, 1397, 870, 1370, 870],
            [52, 440, 75, 465, 97, 500, 100, 570, 58, 575, 55, 535, 22, 532, 22, 512, 52, 512], [175, 560, 235, 555, 240, 575, 215, 575, 175, 570],
            [155, 615, 215, 618, 218, 700, 250, 700, 250, 765, 130, 765, 145, 720, 150, 700], [250, 640, 267, 640, 267, 697, 250, 697],
            [448, 580, 490, 620, 545, 570, 575, 565, 575, 625, 545, 630, 545, 690, 515, 690, 515, 660, 490, 660, 490, 630, 448, 630], [675, 745, 710, 720, 710, 690, 738, 690, 738, 727, 708, 727, 708, 752, 675, 755],
            [255, 855, 290, 830, 321, 828, 321, 843, 290, 843, 290, 855, 258, 860], [870, 855, 900, 850, 902, 880, 870, 880], [1015, 750, 1040, 750, 1040, 765, 1062, 765, 1062, 780, 1035, 780, 1035, 900, 1018, 900],
            [0, 215, 50, 190, 55, 225, 90, 225, 110, 245, 70, 250, 0, 245], [470, 880, 515, 880, 515, 900, 470, 900]]);
        polys(Z9, '#33598f', [[1300, 420, 1340, 420, 1340, 450, 1300, 450]]);
        polys(Z9, ICE, [[610, 630, 670, 630, 670, 660, 610, 660]]);
        polys(Z6, BLUE, [
            [0, 340, 85, 350, 200, 378, 202, 498, 120, 470, 40, 455, 40, 420, 0, 415], [205, 490, 435, 480, 445, 605, 200, 617], [557, 388, 700, 378, 700, 537, 558, 540], [152, 185, 190, 200, 175, 365, 150, 365],
            [1118, 8, 1160, 20, 1155, 70, 1130, 130, 1195, 165, 1195, 195, 1155, 205, 1155, 248, 1135, 248, 1110, 235, 1098, 170, 1070, 165, 1068, 130, 1115, 90],
            [945, 335, 995, 335, 995, 387, 945, 385], [1137, 330, 1175, 328, 1200, 395, 1178, 395, 1175, 375, 1137, 375],
            [1100, 393, 1145, 397, 1160, 455, 1232, 455, 1245, 575, 1310, 555, 1315, 575, 1000, 585, 970, 590, 970, 525, 1100, 520], [948, 483, 970, 483, 970, 555, 948, 555],
            [490, 608, 545, 608, 542, 680, 497, 685], [870, 592, 945, 592, 945, 640, 915, 645, 870, 625], [332, 685, 410, 690, 410, 745, 355, 740, 332, 750], [385, 748, 435, 748, 435, 812, 370, 812, 370, 785, 385, 785],
            [1040, 630, 1095, 610, 1105, 700, 1065, 688, 1065, 655, 1040, 655], [820, 885, 895, 855, 975, 853, 1005, 860, 1005, 920, 945, 915, 900, 890, 825, 920], [1058, 815, 1075, 815, 1075, 858, 1058, 858],
            [1090, 855, 1130, 852, 1130, 900, 1110, 925, 1115, 1050, 1090, 1050], [1140, 940, 1165, 940, 1165, 1005, 1140, 1005], [515, 877, 600, 875, 640, 965, 605, 1030, 595, 1000, 530, 1000, 520, 940, 515, 940],
            [340, 940, 520, 945, 520, 1000, 455, 1005, 455, 1050, 415, 1050, 415, 1015, 350, 1005], [0, 650, 30, 695, 0, 695], [0, 100, 30, 100, 30, 120, 105, 120, 107, 170, 0, 145],
            [1270, 760, 1305, 830, 1310, 905, 1272, 905, 1270, 865, 1243, 865, 1243, 842, 1270, 842], [1370, 885, 1405, 885, 1405, 900, 1370, 900], [1350, 945, 1400, 950, 1400, 1030, 1430, 1030, 1430, 1050, 1340, 1050]]);
        polys(Z6, '#1f4a85', [[400, 285, 435, 285, 435, 322, 405, 322, 400, 345, 385, 335, 390, 320]]);
        polys(Z6, SOFT, [[320, 1008, 415, 1015, 415, 1050, 330, 1050]]);
        polys(Z6, PALE, [[897, 658, 980, 655, 1000, 680, 1065, 655, 1105, 700, 1105, 718, 1000, 715, 900, 712]]);
        polys(Z6, '#5f85b5', [[1020, 760, 1055, 755, 1055, 790, 1010, 800]]);
        polys(Z11, BLUE, [
            [305, 42, 332, 42, 338, 180, 335, 220, 255, 215, 253, 122, 305, 115], [445, 0, 485, 0, 485, 30, 445, 30], [1162, 0, 1190, 0, 1190, 82, 1248, 82, 1265, 112, 1303, 112, 1303, 143, 1250, 130, 1215, 137, 1175, 120],
            [1430, 0, 1525, 0, 1525, 72, 1418, 75], [1530, 150, 1568, 138, 1568, 170, 1530, 170], [0, 385, 205, 380, 205, 420, 180, 470, 187, 655, 130, 655, 75, 640, 70, 575, 45, 545, 50, 490, 80, 460, 0, 445],
            [538, 365, 590, 370, 610, 370, 645, 400, 645, 425, 595, 430, 595, 447, 542, 452], [342, 532, 430, 532, 430, 548, 345, 595], [1132, 347, 1205, 343, 1205, 357, 1095, 392, 1092, 375, 1132, 372],
            [1155, 590, 1212, 600, 1212, 650, 1155, 650], [1318, 405, 1352, 405, 1352, 468, 1505, 462, 1535, 445, 1538, 515, 1455, 560, 1250, 920, 1215, 955, 1190, 920, 1248, 795, 1158, 795, 1158, 705, 1210, 670, 1210, 470, 1318, 468],
            [490, 690, 545, 690, 545, 752, 490, 752], [750, 845, 880, 772, 887, 1062, 770, 1070, 720, 1077, 720, 1000, 760, 950, 720, 910], [225, 952, 385, 950, 385, 1000, 360, 1077, 225, 1077], [0, 965, 40, 1000, 40, 1077, 0, 1077],
            [555, 1060, 620, 1060, 620, 1077, 555, 1077], [1405, 850, 1450, 800, 1490, 797, 1490, 925, 1468, 925, 1468, 978, 1495, 975, 1495, 900, 1437, 870, 1437, 850], [1330, 1000, 1375, 1015, 1365, 1077, 1328, 1077]]);
        polys(Z11, SOFT, [[335, 0, 445, 0, 445, 45, 378, 48, 378, 113, 335, 113], [0, 830, 22, 835, 22, 870, 0, 870]]);
        polys(Z12, BLUE, [
            [200, 20, 240, 20, 240, 65, 200, 65], [385, 170, 440, 150, 470, 205, 470, 268, 388, 270], [526, 270, 695, 265, 695, 297, 530, 302], [220, 355, 247, 355, 247, 405, 220, 405], [560, 462, 587, 462, 587, 490, 560, 490],
            [657, 490, 677, 490, 677, 520, 660, 520], [700, 460, 728, 460, 728, 520, 700, 520], [0, 270, 20, 270, 20, 340, 0, 345], [27, 480, 110, 472, 110, 535, 28, 540],
            [30, 572, 340, 565, 365, 640, 365, 690, 255, 693, 255, 760, 97, 762, 97, 795, 35, 797], [478, 690, 535, 722, 535, 782, 525, 782, 525, 745, 490, 735, 490, 768, 478, 768],
            [592, 718, 728, 715, 728, 778, 590, 782, 578, 772, 578, 752, 592, 752], [928, 840, 982, 838, 982, 897, 928, 897], [790, 70, 850, 70, 850, 128, 855, 133, 790, 135], [742, 135, 803, 135, 803, 215, 765, 215, 745, 190],
            [848, 30, 900, 35, 900, 68, 850, 68], [917, 133, 970, 133, 975, 193, 917, 195], [1028, 130, 1055, 130, 1055, 190, 1028, 190], [1145, 320, 1170, 320, 1170, 333, 1143, 335], [1090, 580, 1110, 590, 1145, 640, 1092, 640],
            [1258, 605, 1293, 622, 1293, 637, 1258, 637], [1435, 730, 1500, 692, 1515, 710, 1445, 752], [1290, 830, 1345, 850, 1372, 892, 1290, 892], [1180, 875, 1205, 890, 1180, 897]]);
        polys(Z12, MID, [[360, 272, 387, 272, 387, 335, 358, 335]]);
        polys(Z12, ICE, [[672, 395, 725, 395, 725, 460, 672, 460]]);

        // place names
        label(491, 122, 'Park Ridge', 0, 13); label(273, 281, 'Bensenville', 0, 13); label(277, 474, 'Elmhurst', 0, 13); label(409, 588, 'Westchester', 0, 13);
        label(431, 723, 'La Grange', 0, 13); label(311, 744, 'Hinsdale', 0, 13); label(574, 916, 'Bridgeview', 0, 13); label(658, 911, 'Burbank', 0, 13);
        label(475, 186, 'State Rte 72', 12); label(514, 263, 'N Pueblo Ave', -90); label(210, 371, 'Lake St', 30); label(74, 328, 'I- 355', -90); label(294, 595, 'I- 88', -40);
        label(106, 644, 'State Rte 56', -9); label(85, 724, 'US Hwy 34', -8); label(275, 709, 'US Hwy 34', -13); label(340, 702, 'I- 294', 85); label(583, 690, 'Harlem Ave', 85);
        label(959, 731, 'I- 90', 90); label(1022, 657, 'US Hwy 41', 70);

        // facilities
        pins(Z1, 'r670,215 r1185,265');
        pins(Z6, `r5,130 g178,185 y152,178 g1147,204 g1182,345 r1112,387 r990,332 r385,320 r407,495 g406,482 g683,482 g658,492 g235,600 r268,598 g221,603 g33,685 r521,628 r978,573 r918,630 r1022,665 r1076,645 r375,725 g430,738 r1004,785 g998,872 r827,880 g1089,885 r1142,960 g1110,950 r588,875 g588,905 r590,960 g572,990 y391,985 g438,990 g314,1010`);
        pins(Z8, `r215,122 y262,162 y258,165 g350,75 g453,125 g443,170 g423,192 r529,168 g820,65 g880,70 r875,175 g853,135 g826,200 r1030,125 r1088,110 r1110,115 r1153,125 g1044,132 g1110,135 g1140,158 g797,315 g767,322 g857,335 r936,378 g1094,322 g1197,325 g745,410 g735,412 g1200,415 g1201,435 y250,345 g349,422 g448,497 r485,490 g490,525 r575,520 g636,552 r878,498 r1097,508 r1228,527 g1155,630 r1235,705 g1252,685 g1276,762 r1105,690 r1115,690 r1125,690 r1100,750 g240,580 g250,588 r207,648 r623,663 g666,650 g348,728 y496,775 g685,775 g860,778 r885,820 g882,800 r652,870`);
        pins(Z9, `g336,45 g752,22 g745,30 r748,95 g747,50 g242,115 g349,115 g368,150 g368,165 g438,160 r40,210 g10,215 r628,205 g675,200 y670,225 g628,255 g757,255 g803,195 r994,160 g1016,45 g1065,95 g1125,95 r1088,60 r1205,85 r1333,95 r1155,140 g1150,165 r1215,170 g1227,190 g1229,215 r1343,215 g1367,270 g1145,268 r1248,300 r1282,310 r1285,400 r1282,420 g1350,385 g51,425 r709,393 r618,483 g1025,418 g1208,470 g1213,515 g1270,510 g1250,525 g1310,540 g1305,545 r243,557 g252,642 g483,620 g520,620 g525,645 g642,635 g153,710 g685,745 g1158,678 g1025,752 r1211,750 r1341,660 r1323,725 g1423,610 g1421,640 r1388,795 g1417,762 g1483,780 g256,835 g890,855 g497,885 g477,895`);
        pins(Z11, `g255,142 r587,390 g1186,335 r1349,395 r1278,460 r66,482 r406,540 r113,608 g1182,598 g522,715 r16,832 r739,848 g740,930 g723,980 g746,1000 g732,1042 g36,1028 r336,1045 g324,998 g574,1090 g1471,957 g1358,1035`);
        pins(Z12, `r465,150 g463,190 r369,258 g436,258 r550,255 g563,255 r236,378 g27,480 g30,500 g28,518 r586,478 r714,385 g707,452 r676,510 r349,560 g360,590 g360,640 g494,710 g64,772 r658,765 g664,760 r947,835 g1020,858 r820,905 r368,935 r755,125 r850,50 g804,90 g880,58 r965,120 g938,125 r1043,125 r1143,320 r1144,575 r1124,605 r1271,622 r1446,742 g1229,755 g1320,815 g1340,848 r1175,885 g1188,878`);

        // radius rings
        out += `<circle cx="960" cy="495" r="427" fill="rgba(0,0,0,.02)" stroke="#ffb7a3" stroke-width="2.6"/>`;
        out += `<circle cx="960" cy="495" r="213" fill="rgba(0,0,0,.016)" stroke="#f6a900" stroke-width="2.6"/>`;
        out += `<circle cx="960" cy="495" r="43" fill="rgba(255,255,255,.02)" stroke="#ff6d52" stroke-width="2.4"/>`;
        out += `<path d="M960 492 C958 486 950 482 950 474 A10 10 0 1 1 970 474 C970 482 962 486 960 492Z" fill="#e03a2d" stroke="#fff" stroke-width=".6"/><circle cx="960" cy="476" r="3.6" fill="#98281f"/>`;

        // watermark
        out += `<g fill="none" stroke="#fff" stroke-width="7" opacity=".9"><circle cx="909" cy="889" r="8"/></g>
            <g fill="none" stroke="#14148c"><circle cx="909" cy="889" r="8" stroke-width="4.4"/><path d="M901 881 Q910 876 919 877" stroke-width="2.6" stroke="#1a1ad8"/><path d="M915 896 L921 899" stroke-width="2"/></g>
            <circle cx="909" cy="889" r="2" fill="#14148c"/>
            <text x="928" y="893" class="wmark">TRACT<tspan fill="#0a2de6">IQ</tspan></text>`;

        document.getElementById('mapSvg').innerHTML = `<style>.mlabel{font-family:Roboto,sans-serif;fill:#4d4d4d;text-anchor:middle;paint-order:stroke;stroke:#fff;stroke-width:.5px}.wmark{font-family:"Liberation Sans",sans-serif;font-weight:700;font-size:13.5px;letter-spacing:2.4px;fill:#14185e;paint-order:stroke;stroke:#fff;stroke-width:2.5px}</style>` + out;
    </script>
</body>

</html>
